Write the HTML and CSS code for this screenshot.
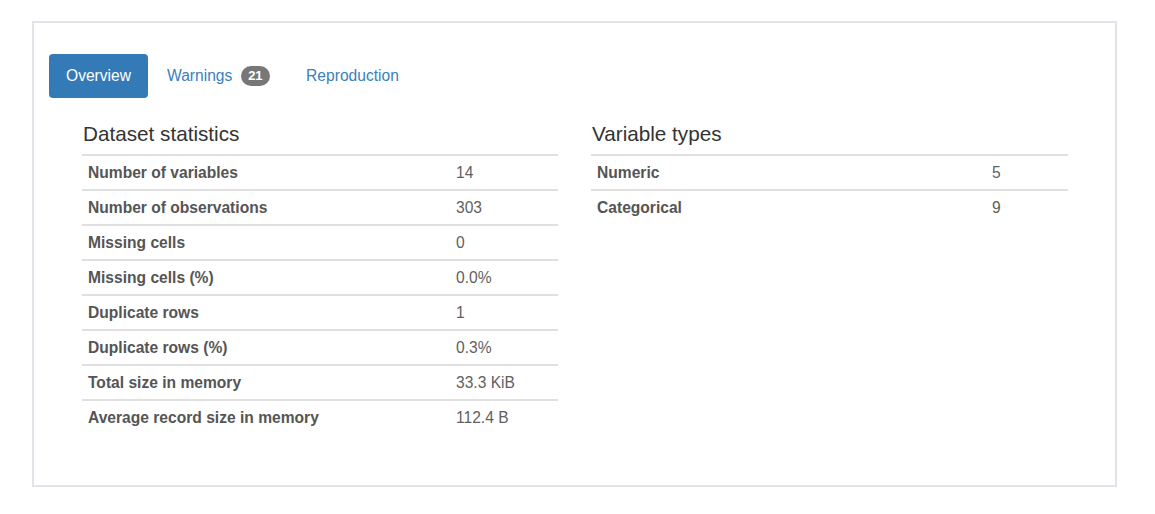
FILE: index.html
```html
<!DOCTYPE html>
<html lang="en">
<head>
<meta charset="utf-8">
<title>Overview</title>
<link rel="stylesheet" href="styles.css">
</head>
<body>
<div class="panel">
  <ul class="tabs">
    <li class="tab active"><a href="#">Overview</a></li>
    <li class="tab"><a href="#">Warnings <span class="badge">21</span></a></li>
    <li class="tab"><a href="#">Reproduction</a></li>
  </ul>
  <div class="cols">
    <section class="col">
      <h4 class="title">Dataset statistics</h4>
      <table class="stats stats-left">
        <tbody>
          <tr><th>Number of variables</th><td>14</td></tr>
          <tr><th>Number of observations</th><td>303</td></tr>
          <tr><th>Missing cells</th><td>0</td></tr>
          <tr><th>Missing cells (%)</th><td>0.0%</td></tr>
          <tr><th>Duplicate rows</th><td>1</td></tr>
          <tr><th>Duplicate rows (%)</th><td>0.3%</td></tr>
          <tr><th>Total size in memory</th><td>33.3 KiB</td></tr>
          <tr><th>Average record size in memory</th><td>112.4 B</td></tr>
        </tbody>
      </table>
    </section>
    <section class="col">
      <h4 class="title">Variable types</h4>
      <table class="stats stats-right">
        <tbody>
          <tr><th>Numeric</th><td>5</td></tr>
          <tr><th>Categorical</th><td>9</td></tr>
        </tbody>
      </table>
    </section>
  </div>
</div>
</body>
</html>
```

FILE: styles.css
```css
html, body {
  margin: 0;
  padding: 0;
  background: #fff;
}

body {
  font-family: "Liberation Sans", Arial, Helvetica, sans-serif;
  font-size: 15.5px;
  color: #333;
}

.panel {
  box-sizing: border-box;
  width: 1085px;
  height: 466px;
  margin: 21px 0 0 32px;
  border: 2px solid #e3e3e9;
  padding: 31px 15px 0 15px;
}

.tabs {
  list-style: none;
  margin: 0;
  padding: 0;
  display: flex;
  gap: 2px;
}

.tab a {
  display: block;
  padding: 11px 17px;
  line-height: 22px;
  font-size: 15.6px;
  color: #3a80bd;
  text-decoration: none;
  border-radius: 4px;
}

.tab.active a {
  background: #337ab7;
  color: #fff;
}

.badge {
  display: inline-block;
  vertical-align: 1px;
  margin-left: 4px;
  padding: 3px 7.5px 4px;
  font-size: 13px;
  font-weight: bold;
  line-height: 13px;
  color: #fff;
  background: #777;
  border-radius: 11px;
}

.cols {
  display: grid;
  grid-template-columns: 476px 477px;
  column-gap: 33px;
  padding: 0 33px;
  margin-top: 25px;
}

.title {
  margin: 0 0 9px 1px;
  font-size: 20.7px;
  font-weight: normal;
  line-height: 22px;
  color: #333;
}

.stats {
  width: 100%;
  border-collapse: collapse;
}

.stats tr {
  border-top: 2px solid #e0e0e0;
}

.stats th,
.stats td {
  padding: 6px 6px;
  line-height: 21px;
  text-align: left;
  font-size: 15.6px;
}

.stats th {
  font-weight: bold;
  color: #555;
}

.stats td {
  color: #5f5f5f;
}

.stats-left th {
  width: 356px;
}

.stats-right th {
  width: 383px;
}
```
